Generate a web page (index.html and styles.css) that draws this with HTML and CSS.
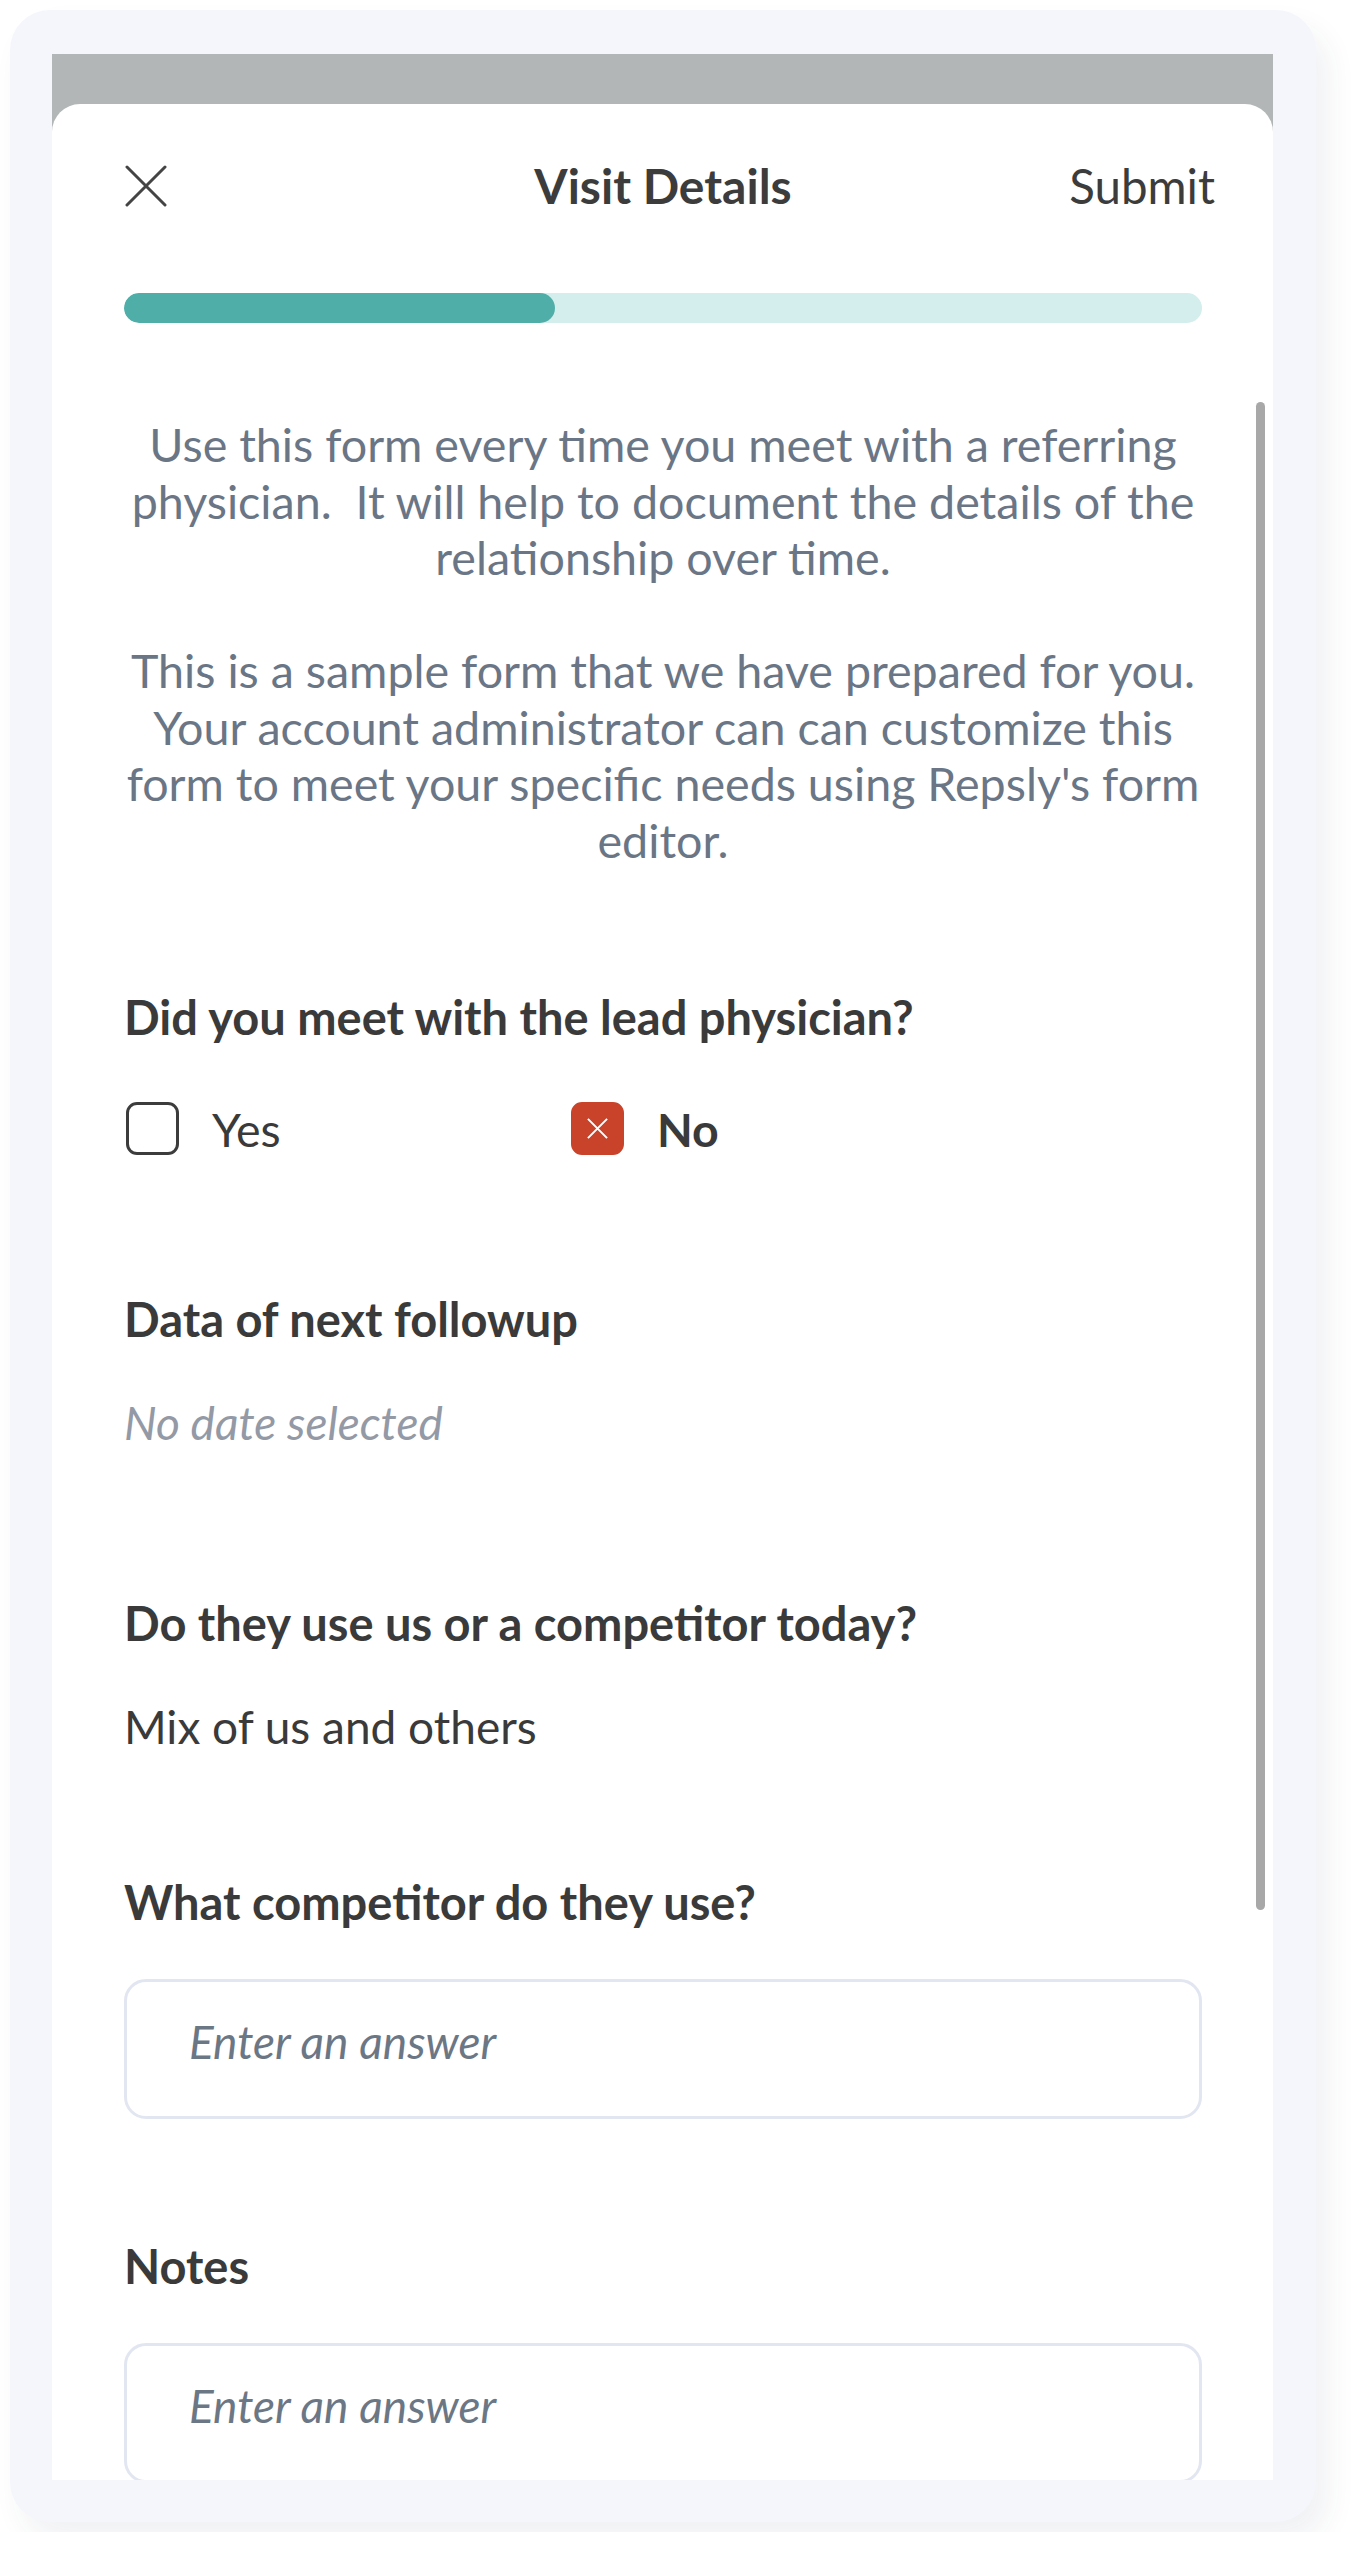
FILE: index.html
```html
<!DOCTYPE html>
<html>
<head>
<meta charset="utf-8">
<meta name="viewport" content="width=device-width, initial-scale=1">
<title>Visit Details</title>
<link rel="stylesheet" href="styles.css">
</head>
<body>
<div id="device-frame">
    <div id="screen">
        <div class="sheet">
            <div class="sheet-header">
                <svg class="close-icon" viewBox="0 0 42 42" aria-label="Close">
                    <path d="M2 2 L40 40 M40 2 L2 40" stroke="#444" stroke-width="3" stroke-linecap="round" fill="none"/>
                </svg>
                <h1 class="sheet-title">Visit Details</h1>
                <span class="submit-link">Submit</span>
            </div>

            <div class="progress">
                <div class="progress-fill" style="width: 40%"></div>
            </div>

            <div class="intro">
                <p>Use this form every time you meet with a referring<br>physician.&nbsp; It will help to document the details of the<br>relationship over time.</p>
                <p>This is a sample form that we have prepared for you.<br>Your account administrator can can customize this<br>form to meet your specific needs using Repsly's form<br>editor.</p>
            </div>

            <div class="field first-field">
                <div class="field-label">Did you meet with the lead physician?</div>
                <div class="options">
                    <div class="option">
                        <span class="checkbox"></span>
                        <span class="option-text">Yes</span>
                    </div>
                    <div class="option selected">
                        <span class="checkbox checked">
                            <svg viewBox="0 0 24 24"><path d="M2 2 L22 22 M22 2 L2 22" stroke="#fff" stroke-width="2" fill="none"/></svg>
                        </span>
                        <span class="option-text">No</span>
                    </div>
                </div>
            </div>

            <div class="field after-options">
                <div class="field-label">Data of next followup</div>
                <div class="field-value empty">No date selected</div>
            </div>

            <div class="field after-date">
                <div class="field-label">Do they use us or a competitor today?</div>
                <div class="field-value">Mix of us and others</div>
            </div>

            <div class="field">
                <div class="field-label">What competitor do they use?</div>
                <div class="text-input">Enter an answer</div>
            </div>

            <div class="field">
                <div class="field-label">Notes</div>
                <div class="text-input">Enter an answer</div>
            </div>
        </div>
        <div class="scrollbar"></div>
    </div>
</div>
</body>
</html>
```

FILE: styles.css
```css
/* Reset */
* { margin: 0; padding: 0; box-sizing: border-box; }

body {
    background: #ffffff;
    padding: 10px;
    font-family: Lato, "Open Sans", sans-serif;
    color: #3c3c3c;
}

/* Outer device frame */
#device-frame {
    width: 1306px;
    height: 2512px;
    padding: 44px 43px 42px 42px;
    background: #f5f6fb;
    border-radius: 40px;
    box-shadow: 12px 18px 30px rgba(40, 50, 80, 0.07);
}

/* Phone screen */
#screen {
    position: relative;
    width: 1221px;
    height: 2426px;
    overflow: hidden;
    background: #b2b6b7;
}

.sheet {
    margin-top: 50px;
    height: 2400px;
    background: #ffffff;
    border-radius: 28px 28px 0 0;
    padding: 53px 71px 0 72px;
}

/* Header */
.sheet-header {
    display: grid;
    grid-template-columns: 1fr auto 1fr;
    align-items: center;
    height: 58px;
}

.close-icon {
    width: 42px;
    height: 42px;
    margin-left: 1px;
    display: block;
}

.sheet-title {
    font-size: 48px;
    font-weight: 700;
    line-height: 58px;
    color: #3c3c3c;
}

.submit-link {
    justify-self: end;
    font-size: 47.5px;
    line-height: 58px;
    color: #3c3c3c;
    margin-right: -13px;
}

/* Progress */
.progress {
    margin-top: 78px;
    height: 30px;
    border-radius: 15px;
    background: #d4eeed;
    overflow: hidden;
}

.progress-fill {
    height: 100%;
    border-radius: 15px;
    background: #50aea8;
}

/* Intro text */
.intro {
    margin-top: 93px;
    text-align: center;
    font-size: 46.6px;
    line-height: 56.5px;
    color: #6a7685;
}

.intro p + p {
    margin-top: 56.5px;
}

/* Form fields */
.field {
    margin-top: 119px;
}

.first-field { margin-top: 121px; }
.after-options { margin-top: 136px; }
.after-date { margin-top: 144px; }

.field-label {
    font-size: 47px;
    font-weight: 700;
    line-height: 56px;
    color: #3a3a3a;
}

.field-value {
    margin-top: 48px;
    font-size: 46px;
    line-height: 56px;
    color: #3a3a3a;
}

.field-value.empty {
    font-style: italic;
    color: #9499a6;
}

.options {
    margin-top: 57px;
    display: grid;
    grid-template-columns: 447px auto;
}

.option {
    display: flex;
    align-items: center;
    gap: 33px;
    height: 53px;
    font-size: 46.5px;
    color: #3a3a3a;
}

.option:first-child { padding-left: 2px; }

.option.selected .option-text { font-weight: 700; }

.checkbox {
    width: 53px;
    height: 53px;
    border: 3px solid #3c3c3c;
    border-radius: 11px;
    display: flex;
    align-items: center;
    justify-content: center;
}

.checkbox.checked {
    background: #c9432a;
    border-color: #c9432a;
}

.checkbox svg {
    width: 23px;
    height: 23px;
    display: block;
}

.text-input {
    margin-top: 49px;
    height: 140px;
    border: 3px solid #e2e6f0;
    border-radius: 22px;
    padding: 32px 62px 0;
    font-size: 46px;
    line-height: 56px;
    font-style: italic;
    color: #6b7785;
}

/* Scroll indicator */
.scrollbar {
    position: absolute;
    top: 348px;
    right: 8px;
    width: 9px;
    height: 1508px;
    border-radius: 5px;
    background: #a8a8a8;
}
```
